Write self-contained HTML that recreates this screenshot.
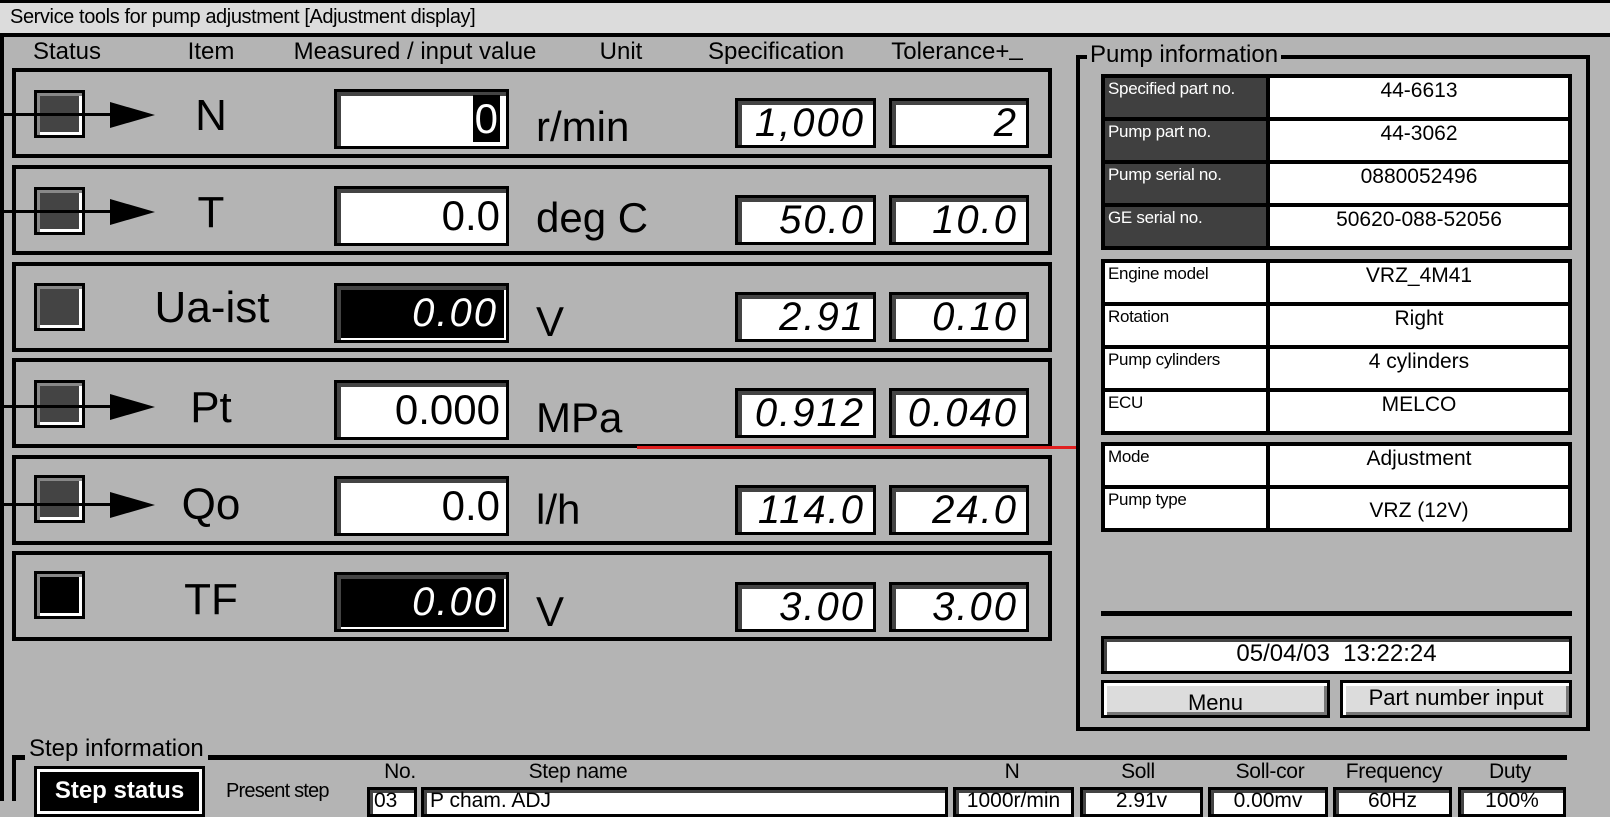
<!DOCTYPE html>
<html><head><meta charset="utf-8">
<style>
*{margin:0;padding:0;box-sizing:border-box}
body{width:1610px;height:801px;overflow:hidden;background:#b4b4b4;font-family:"Liberation Sans",sans-serif;position:relative;color:#000}
.a{position:absolute}
.title{left:0;top:0;width:1610px;height:37px;background:#dcdcdc;border-top:3px solid #000;border-bottom:4px solid #000;font-size:20px;line-height:29px;padding-left:10px;letter-spacing:-0.4px}
.lframe{left:0;top:36px;width:4px;height:765px;background:#000}
.hdr{top:37px;font-size:24px;line-height:30px;transform:translateX(-50%);white-space:nowrap}
.row{left:12px;width:1040px;height:90px;border:4px solid #000}
.st{left:34px;width:51px;height:48px;border:3px solid #000;background:#444;box-shadow:inset 3px 3px 0 #888,inset -3px -3px 0 #fff}
.st.blk{background:#000}
.arrowl{left:0;height:3px;background:#000}
.lbl{font-size:44px;transform:translateX(-50%);white-space:nowrap}
.meas{left:334px;width:175px;height:60px;border:3px solid #000;background:#fff;box-shadow:inset 4px 4px 0 #444;text-align:right;font-size:42px;line-height:54px;padding-right:6px}
.meas.dk{background:#000;color:#fff;box-shadow:inset 4px 4px 0 #444,inset -2px -2px 0 #fff}
.unit{left:536px;font-size:42px;white-space:nowrap}
.lcd{height:50px;border:3px solid #000;background:#fff;box-shadow:inset 4px 4px 0 #444;text-align:right;font-family:"Liberation Sans Narrow","Liberation Sans",sans-serif;font-style:italic;font-size:40px;line-height:44px;padding-right:8px;letter-spacing:2px;font-weight:300}
.lcd.meas{height:60px;line-height:54px}
.panel{left:1076px;top:55px;width:514px;height:676px;border:4px solid #000}
table{position:absolute;border-collapse:collapse;left:1101px;width:471px;border:4px solid #000}
td{border:4px solid #000;background:#fff;vertical-align:top;height:43px}
td.k{width:165px;font-size:17px;padding:1px 3px;letter-spacing:-0.3px}
td.k.d{background:#404040;color:#fff}
td.v{font-size:21px;text-align:center;padding-top:1px}
.btn{height:38px;border:3px solid #000;background:#dcdcdc;box-shadow:inset 3px 3px 0 #fff,inset -3px -3px 0 #777;text-align:center;font-size:22px}
.sh{top:761px;font-size:21px;line-height:22px;transform:translateX(-50%);white-space:nowrap;letter-spacing:-0.3px}
.cell{top:787px;height:30px;border:3px solid #000;background:#fff;box-shadow:inset 3px 3px 0 #444;font-size:21px;line-height:22px;text-align:center}
</style></head><body>
<div class="a title">Service tools for pump adjustment [Adjustment display]</div>
<div class="a lframe"></div>

<div class="a hdr" style="left:67px">Status</div>
<div class="a hdr" style="left:211px">Item</div>
<div class="a hdr" style="left:415px">Measured / input value</div>
<div class="a hdr" style="left:621px">Unit</div>
<div class="a hdr" style="left:776px">Specification</div>
<div class="a hdr" style="left:957px">Tolerance+<span style="position:relative;top:-4px">_</span></div>

<div class="a row" style="top:68px"></div>
<div class="a st" style="top:90px"></div>
<div class="a arrowl" style="top:113px;width:130px"></div>
<svg class="a" style="left:110px;top:102px" width="46" height="26"><polygon points="0,0 45,13 0,26" fill="#000"/></svg>
<div class="a lbl" style="left:211px;top:91px">N</div>
<div class="a meas" style="top:89px"><span style="background:#000;color:#fff;padding:0 2px">0</span></div>
<div class="a unit" style="top:103px">r/min</div>
<div class="a lcd" style="left:735px;top:98px;width:141px">1,000</div>
<div class="a lcd" style="left:889px;top:98px;width:140px">2</div>

<div class="a row" style="top:165px"></div>
<div class="a st" style="top:187px"></div>
<div class="a arrowl" style="top:210px;width:130px"></div>
<svg class="a" style="left:110px;top:199px" width="46" height="26"><polygon points="0,0 45,13 0,26" fill="#000"/></svg>
<div class="a lbl" style="left:211px;top:188px">T</div>
<div class="a meas" style="top:186px">0.0</div>
<div class="a unit" style="top:194px">deg C</div>
<div class="a lcd" style="left:735px;top:195px;width:141px">50.0</div>
<div class="a lcd" style="left:889px;top:195px;width:140px">10.0</div>

<div class="a row" style="top:262px"></div>
<div class="a st" style="top:283px"></div>
<div class="a lbl" style="left:212px;top:283px">Ua-ist</div>
<div class="a meas dk lcd" style="top:283px">0.00</div>
<div class="a unit" style="top:298px">V</div>
<div class="a lcd" style="left:735px;top:292px;width:141px">2.91</div>
<div class="a lcd" style="left:889px;top:292px;width:140px">0.10</div>

<div class="a row" style="top:358px"></div>
<div class="a st" style="top:380px"></div>
<div class="a arrowl" style="top:405px;width:130px"></div>
<svg class="a" style="left:110px;top:394px" width="46" height="26"><polygon points="0,0 45,13 0,26" fill="#000"/></svg>
<div class="a lbl" style="left:211px;top:383px">Pt</div>
<div class="a meas" style="top:380px">0.000</div>
<div class="a unit" style="top:394px">MPa</div>
<div class="a lcd" style="left:735px;top:388px;width:141px">0.912</div>
<div class="a lcd" style="left:889px;top:388px;width:140px">0.040</div>
<div class="a" style="left:637px;top:446px;width:440px;height:3px;background:#e02020"></div>

<div class="a row" style="top:455px"></div>
<div class="a st" style="top:475px"></div>
<div class="a arrowl" style="top:503px;width:130px"></div>
<svg class="a" style="left:110px;top:492px" width="46" height="26"><polygon points="0,0 45,13 0,26" fill="#000"/></svg>
<div class="a lbl" style="left:211px;top:480px">Qo</div>
<div class="a meas" style="top:476px">0.0</div>
<div class="a unit" style="top:486px">l/h</div>
<div class="a lcd" style="left:735px;top:485px;width:141px">114.0</div>
<div class="a lcd" style="left:889px;top:485px;width:140px">24.0</div>

<div class="a row" style="top:551px"></div>
<div class="a st blk" style="top:571px"></div>
<div class="a lbl" style="left:211px;top:575px">TF</div>
<div class="a meas dk lcd" style="top:572px">0.00</div>
<div class="a unit" style="top:588px">V</div>
<div class="a lcd" style="left:735px;top:582px;width:141px">3.00</div>
<div class="a lcd" style="left:889px;top:582px;width:140px">3.00</div>

<div class="a panel"></div>
<div class="a" style="left:1087px;top:40px;background:#b4b4b4;font-size:24px;padding:0 3px;line-height:30px">Pump information</div>
<table style="top:74px">
<tr><td class="k d">Specified part no.</td><td class="v">44-6613</td></tr>
<tr><td class="k d">Pump part no.</td><td class="v">44-3062</td></tr>
<tr><td class="k d">Pump serial no.</td><td class="v">0880052496</td></tr>
<tr><td class="k d">GE serial no.</td><td class="v">50620-088-52056</td></tr>
</table>
<table style="top:259px">
<tr><td class="k">Engine model</td><td class="v">VRZ_4M41</td></tr>
<tr><td class="k">Rotation</td><td class="v">Right</td></tr>
<tr><td class="k">Pump cylinders</td><td class="v">4 cylinders</td></tr>
<tr><td class="k">ECU</td><td class="v">MELCO</td></tr>
</table>
<table style="top:442px">
<tr><td class="k">Mode</td><td class="v">Adjustment</td></tr>
<tr><td class="k">Pump type</td><td class="v" style="padding-top:10px">VRZ (12V)</td></tr>
</table>
<div class="a" style="left:1101px;top:611px;width:471px;height:5px;background:#000"></div>
<div class="a" style="left:1101px;top:636px;width:471px;height:38px;border:3px solid #000;background:#fff;box-shadow:inset 3px 3px 0 #444;text-align:center;font-size:24px;line-height:30px">05/04/03&nbsp; 13:22:24</div>
<div class="a btn" style="left:1101px;top:680px;width:229px;line-height:40px">Menu</div>
<div class="a btn" style="left:1340px;top:680px;width:232px;line-height:30px">Part number input</div>

<div class="a" style="left:12px;top:755px;width:1555px;height:5px;background:#000"></div>
<div class="a" style="left:12px;top:755px;width:4px;height:46px;background:#000"></div>
<div class="a" style="left:25px;top:735px;background:#b4b4b4;font-size:24px;padding:0 4px;line-height:28px">Step information</div>
<div class="a" style="left:37px;top:769px;width:165px;height:45px;background:#000;border:3px solid #fff;outline:3px solid #000;color:#fff;font-weight:bold;font-size:24px;text-align:center;line-height:38px">Step status</div>
<div class="a" style="left:226px;top:780px;font-size:20px;letter-spacing:-0.8px">Present step</div>
<div class="a sh" style="left:400px">No.</div>
<div class="a sh" style="left:578px">Step name</div>
<div class="a sh" style="left:1012px">N</div>
<div class="a sh" style="left:1138px">Soll</div>
<div class="a sh" style="left:1270px">Soll-cor</div>
<div class="a sh" style="left:1394px">Frequency</div>
<div class="a sh" style="left:1510px">Duty</div>
<div class="a cell" style="left:367px;width:50px;text-align:left;padding-left:4px">03</div>
<div class="a cell" style="left:421px;width:527px;text-align:left;padding-left:6px">P cham. ADJ</div>
<div class="a cell" style="left:953px;width:121px">1000r/min</div>
<div class="a cell" style="left:1080px;width:123px">2.91v</div>
<div class="a cell" style="left:1208px;width:120px">0.00mv</div>
<div class="a cell" style="left:1333px;width:119px">60Hz</div>
<div class="a cell" style="left:1458px;width:108px">100%</div>
</body></html>
